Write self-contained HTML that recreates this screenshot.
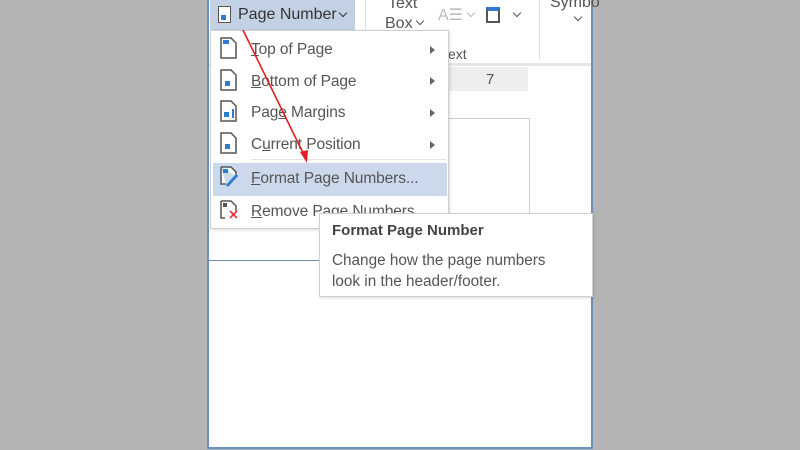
<!DOCTYPE html>
<html><head><style>
*{margin:0;padding:0;box-sizing:border-box}
body{width:800px;height:450px;background:#b4b4b4;position:relative;overflow:hidden;font-family:"Liberation Sans","DejaVu Sans",sans-serif;color:#444}
.abs{position:absolute}
.frame{left:207px;top:-4px;width:386px;height:453px;background:#fff;border:2px solid #6a8fb8}
.t{position:absolute;font-size:16px;color:#555;white-space:nowrap}
.item{position:absolute;left:40px;font-size:15.5px;color:#555;letter-spacing:-0.1px}
.tri{position:absolute;left:219px;width:0;height:0;border-top:4px solid transparent;border-bottom:4px solid transparent;border-left:5px solid #666}
.chev{position:absolute;width:6px;height:6px;border-right:1.6px solid #555;border-bottom:1.6px solid #555;transform:rotate(45deg)}
</style></head><body>
<div class="abs frame"></div>
<!-- ribbon -->
<div class="abs" style="left:209px;top:63px;width:382px;height:3px;background:#e6e6e6"></div>
<div class="abs" style="left:365px;top:0;width:1px;height:60px;background:#ddd"></div>
<div class="abs" style="left:539px;top:0;width:1px;height:60px;background:#ddd"></div>
<div class="t" style="left:388px;top:-5px">Text</div>
<div class="t" style="left:385px;top:15px">Box</div>
<div class="chev" style="left:417px;top:18px"></div>
<div class="t" style="left:438px;top:5px;color:#bbb">A☰</div>
<div class="chev" style="left:468px;top:10px;border-color:#bbb"></div>
<div class="abs" style="left:486px;top:7px;width:14px;height:16px;border:2px solid #555;border-top:4px solid #2f7bd0"></div>
<div class="chev" style="left:514px;top:10px"></div>
<div class="t" style="left:448px;top:46px;font-size:14px">ext</div>
<div class="t" style="left:550px;top:-6px">Symbo</div>
<div class="chev" style="left:575px;top:14px"></div>
<div class="abs" style="left:448px;top:67px;width:80px;height:24px;background:#eee"></div>
<div class="t" style="left:486px;top:71px;font-size:15px">7</div>
<div class="abs" style="left:448px;top:118px;width:82px;height:96px;border:1px solid #ccc;border-left:none"></div>
<div class="abs" style="left:209px;top:260px;width:112px;height:1px;background:#6a8fb8"></div>
<!-- page number button -->
<div class="abs" style="left:210px;top:0;width:145px;height:31px;background:#c3d1e5"></div>
<div class="abs" style="left:218px;top:6px;width:13px;height:17px;border:1.5px solid #555;background:#fff"><div style="position:absolute;left:2px;top:8px;width:5px;height:5px;background:#2f7bd0"></div></div>
<div class="t" style="left:238px;top:6px;color:#333">Page Number</div>
<div class="chev" style="left:340px;top:10px;border-color:#333"></div>
<!-- menu -->
<div class="abs" style="left:210px;top:30px;width:239px;height:199px;background:#fff;border:1px solid #d0d0d0;box-shadow:1px 1px 3px rgba(0,0,0,.15)">
 <div class="abs" style="left:2px;top:132px;width:234px;height:33px;background:#ccd9ec"></div>
 <div class="abs" style="left:40px;top:128px;width:195px;height:1px;background:#e3e3e3"></div>
 <div class="item" style="top:10px"><u>T</u>op of Page</div>
 <div class="item" style="top:42px"><u>B</u>ottom of Page</div>
 <div class="item" style="top:73px">Pag<u>e</u> Margins</div>
 <div class="item" style="top:105px">C<u>u</u>rrent Position</div>
 <div class="item" style="top:139px"><u>F</u>ormat Page Numbers...</div>
 <div class="item" style="top:172px"><u>R</u>emove Page Numbers...</div>
 <div class="tri" style="top:15px"></div><div class="tri" style="top:46px"></div><div class="tri" style="top:78px"></div><div class="tri" style="top:110px"></div>
 <svg class="abs" style="left:6px;top:4px" width="24" height="200" viewBox="0 0 24 200">
  <g fill="#fff" stroke="#555" stroke-width="1.5">
   <path d="M4 3h10l5 5v15H4z"/><path d="M4 35h10l5 5v15H4z"/><path d="M4 66h10l5 5v15H4z"/><path d="M4 98h10l5 5v15H4z"/>
   <path d="M4 132h10l5 5v4M4 132v17h5"/><path d="M4 166h10l5 5v5M4 166v17h4"/>
  </g>
  <g fill="#2f7bd0"><rect x="6" y="5" width="6" height="4"/><rect x="8" y="46" width="5" height="5"/><rect x="7" y="77" width="5" height="5"/><rect x="15" y="74" width="2" height="9"/><rect x="8" y="109" width="5" height="5"/><rect x="6" y="134" width="5" height="4"/></g>
  <path d="M9 150l10-11 2 2-10 11z" fill="#2f7bd0"/>
  <path d="M13 176l7 7M20 176l-7 7" stroke="#e33" stroke-width="1.6"/>
  <rect x="6" y="168" width="4" height="4" fill="#555"/>
 </svg>
</div>
<!-- tooltip -->
<div class="abs" style="left:319px;top:213px;width:274px;height:84px;background:#fff;border:1px solid #d0d0d0;box-shadow:1px 1px 3px rgba(0,0,0,.15)">
 <div class="t" style="left:12px;top:8px;font-weight:bold;color:#444;font-size:15px">Format Page Number</div>
 <div class="t" style="left:12px;top:36px;font-size:15.3px;line-height:21px;color:#555">Change how the page numbers<br>look in the header/footer.</div>
</div>
<svg class="abs" style="left:0;top:0" width="800" height="450"><line x1="243" y1="30" x2="304" y2="155" stroke="#e02020" stroke-width="1.6"/><path d="M300 152l7 11 1-13z" fill="#e02020"/></svg>
</body></html>
